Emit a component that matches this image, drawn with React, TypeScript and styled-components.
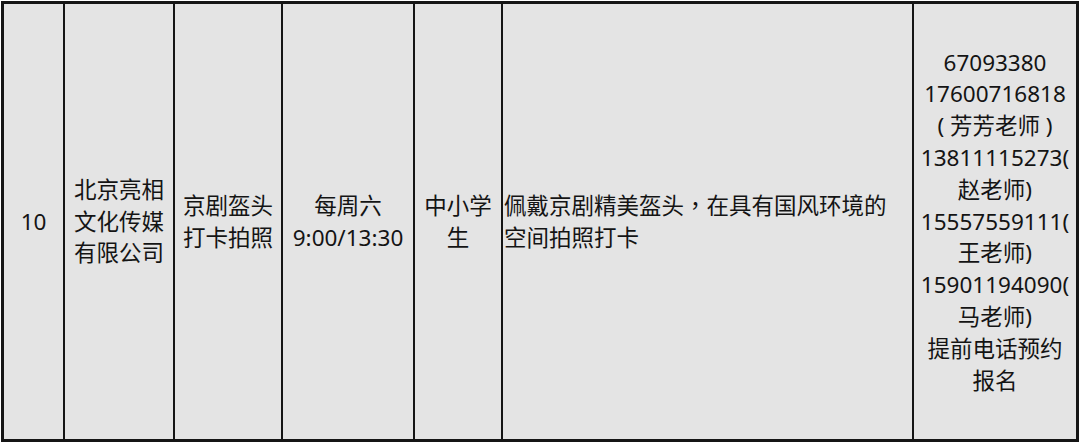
import React from "react"
import styled, { createGlobalStyle } from "styled-components"

const GlobalStyle = createGlobalStyle`
	html, body {
		margin: 0;
		padding: 0;
		background: #ffffff;
	}
	body {
		font-family: "Noto Sans", "Noto Sans CJK SC", sans-serif;
	}
`

const columns = [59, 108, 106, 130, 86, 409, 162]

const Sheet = styled.div`
	margin: 1px 0 0 1px;
	width: 1078px;
	height: 441px;
	box-sizing: border-box;
	display: grid;
	grid-template-columns: ${columns.map((w) => `${w}px`).join(" ")};
	gap: 2px;
	border: 3px solid #151515;
	background: #151515;
`

const Cell = styled.div<{ $left?: boolean }>`
	background: #e4e4e4;
	display: flex;
	flex-direction: column;
	justify-content: center;
	align-items: ${(p) => (p.$left ? "flex-start" : "center")};
	padding: 0 ${(p) => (p.$left ? "1px" : "0")};
	color: #141414;
	font-size: 22.5px;
	line-height: 31.8px;
	white-space: pre;
	overflow: hidden;
`

const Line = styled.span`
	display: block;
	text-align: center;
`

// full-width comma sits centred in its box, as in the sheet
const Punct = styled.span`
	font-family: "Noto Sans CJK TC", "Noto Sans CJK SC", sans-serif;
`

const renderLine = (text: string) =>
	text.split(/(，)/).map((part, k) =>
		part === "，" ? <Punct key={k}>{part}</Punct> : part
	)

const row: { lines: string[]; left?: boolean }[] = [
	{ lines: ["10"] },
	{ lines: ["北京亮相", "文化传媒", "有限公司"] },
	{ lines: ["京剧盔头", "打卡拍照"] },
	{ lines: ["每周六", "9:00/13:30"] },
	{ lines: ["中小学", "生"] },
	{
		lines: ["佩戴京剧精美盔头，在具有国风环境的", "空间拍照打卡"],
		left: true,
	},
	{
		lines: [
			"67093380",
			"17600716818",
			"( 芳芳老师 )",
			"13811115273(",
			"赵老师)",
			"15557559111(",
			"王老师)",
			"15901194090(",
			"马老师)",
			"提前电话预约",
			"报名",
		],
	},
]

export default function App() {
	return (
		<>
			<GlobalStyle />
			<Sheet>
				{row.map((cell, i) => (
					<Cell key={i} $left={cell.left}>
						{cell.lines.map((l, j) => (
							<Line key={j}>{renderLine(l)}</Line>
						))}
					</Cell>
				))}
			</Sheet>
		</>
	)
}
